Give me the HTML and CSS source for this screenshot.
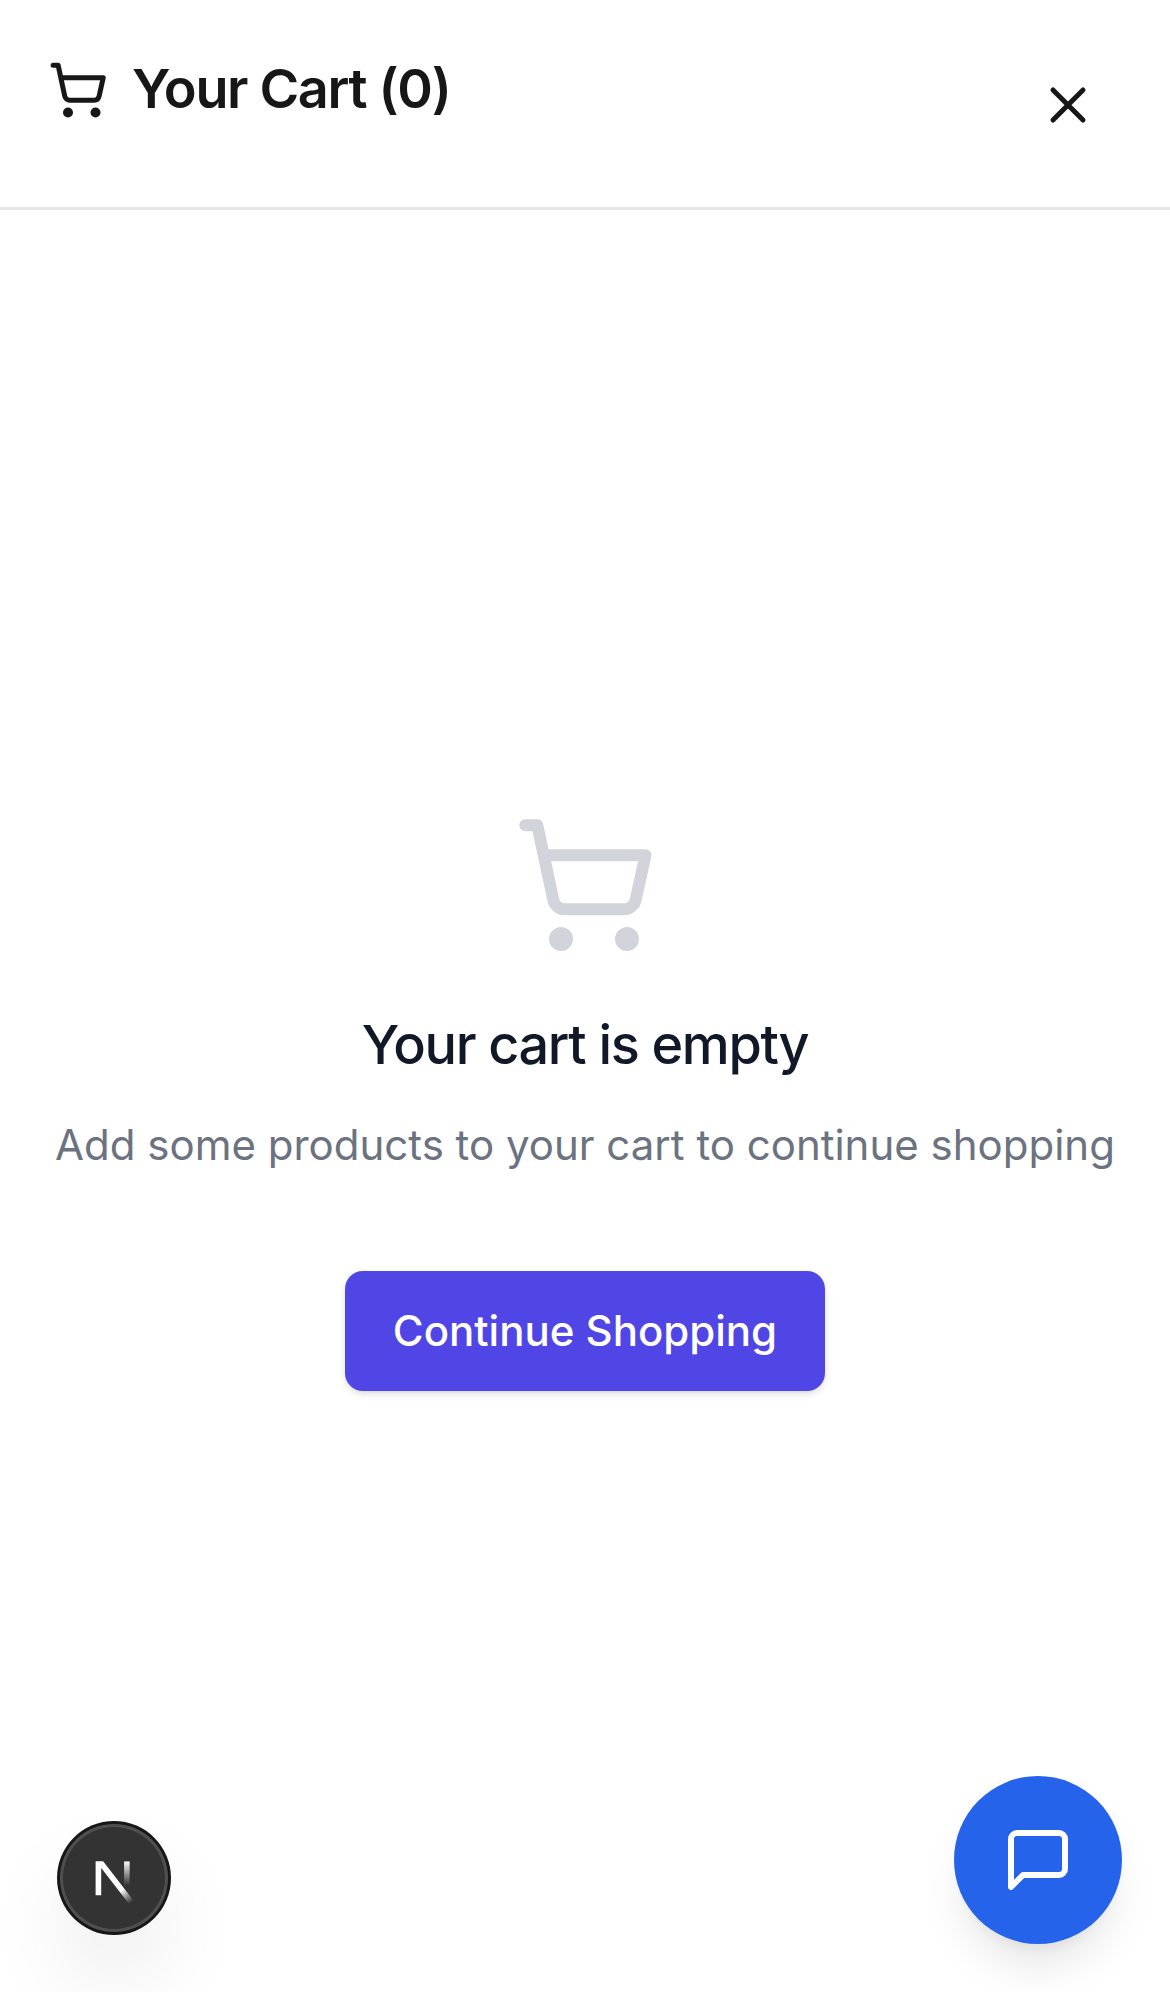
FILE: index.html
```html
<!DOCTYPE html>
<html lang="en">
<head>
<meta charset="utf-8">
<title>Your Cart</title>
<link rel="stylesheet" href="styles.css">
</head>
<body>
<div class="drawer">
  <header class="drawer-header">
    <h2 class="drawer-title">
      <svg class="icon title-icon" viewBox="0 0 24 24"><circle cx="8" cy="21" r="1"/><circle cx="19" cy="21" r="1"/><path d="M2.05 2.05h2l2.66 12.42a2 2 0 0 0 2 1.58h9.78a2 2 0 0 0 1.95-1.57l1.65-7.43H5.12"/></svg>
      <span>Your Cart (0)</span>
    </h2>
    <button class="close" aria-label="Close">
      <svg class="icon" viewBox="0 0 24 24"><path d="M18 6 6 18M6 6l12 12"/></svg>
    </button>
  </header>
  <main class="empty">
    <svg class="icon empty-icon" viewBox="0 0 24 24"><circle cx="8" cy="21" r="1"/><circle cx="19" cy="21" r="1"/><path d="M2.05 2.05h2l2.66 12.42a2 2 0 0 0 2 1.58h9.78a2 2 0 0 0 1.95-1.57l1.65-7.43H5.12"/></svg>
    <h3 class="empty-title">Your cart is empty</h3>
    <p class="empty-text">Add some products to your cart to continue shopping</p>
    <button class="continue">Continue Shopping</button>
  </main>
</div>
<button class="dev-badge" aria-label="Dev tools">
  <svg viewBox="0 0 36 36" fill="none">
    <defs>
      <linearGradient id="diagonal" x1="9.95555" y1="11.1226" x2="15.4778" y2="17.9671" gradientUnits="userSpaceOnUse"><stop stop-color="#fff"/><stop offset=".604" stop-color="#fff" stop-opacity="0"/></linearGradient>
      <linearGradient id="stem" x1="11.8222" y1="1.40039" x2="11.791" y2="9.62542" gradientUnits="userSpaceOnUse"><stop stop-color="#fff"/><stop offset="1" stop-color="#fff" stop-opacity="0"/></linearGradient>
      <clipPath id="mark"><rect x="0" y="1.5" width="16" height="14.5"/></clipPath>
    </defs>
    <g transform="translate(10.46 10.9)" stroke-width="1.86" clip-path="url(#mark)">
      <path d="M13.3 15.2 2.34 1v11.85" stroke="url(#diagonal)"/>
      <path d="M11.825 1.5v11.6" stroke="url(#stem)"/>
    </g>
  </svg>
</button>
<button class="chat" aria-label="Chat">
  <svg class="icon" viewBox="0 0 24 24"><path d="M21 15a2 2 0 0 1-2 2H7l-4 4V5a2 2 0 0 1 2-2h14a2 2 0 0 1 2 2z"/></svg>
</button>
</body>
</html>
```
FILE: styles.css
```css
* { box-sizing: border-box; margin: 0; padding: 0; }
body {
  background: #fff;
  font-family: Inter, "Liberation Sans", sans-serif;
  font-variation-settings: "opsz" 14;
}
button { border: 0; font: inherit; font-variation-settings: inherit; background: none; }
svg { display: block; flex: none; }
.icon { fill: none; stroke: currentColor; stroke-width: 2; stroke-linecap: round; stroke-linejoin: round; }
.drawer { display: flex; flex-direction: column; height: 1992px; }
.drawer-header {
  display: flex;
  justify-content: space-between;
  align-items: flex-start;
  height: 210px;
  padding: 48px;
  border-bottom: 3px solid #e5e7eb;
  color: #171717;
}
.drawer-title {
  display: flex;
  align-items: center;
  gap: 24px;
  height: 84px;
  font-size: 54px;
  font-weight: 600;
  line-height: 82px;
  letter-spacing: -0.025em;
}
.drawer-title span { padding-bottom: 2px; }
.title-icon { width: 60px; height: 60px; }
.close {
  display: flex;
  align-items: center;
  justify-content: center;
  width: 108px;
  height: 114px;
  color: inherit;
}
.close svg { width: 60px; height: 60px; }
.empty {
  flex: 1;
  display: flex;
  flex-direction: column;
  align-items: center;
  justify-content: center;
  padding-top: 2px;
  white-space: nowrap;
}
.empty-icon { width: 144px; height: 144px; margin-bottom: 48px; color: #d1d5db; }
.empty-title { margin-bottom: 30px; font-size: 54px; font-weight: 500; line-height: 80px; color: #111827; letter-spacing: -0.025em; }
.empty-text { margin-bottom: 96px; font-size: 42px; line-height: 60px; color: #6b7280; }
.continue {
  height: 120px;
  padding: 0 48px;
  border-radius: 18px;
  background: #4f46e5;
  color: #fff;
  font-size: 42px;
  font-weight: 500;
  line-height: 60px;
  box-shadow: 0 3px 9px rgba(0,0,0,.1), 0 3px 6px -3px rgba(0,0,0,.1);
}
.dev-badge {
  position: fixed;
  left: 60px;
  bottom: 60px;
  width: 108px;
  height: 108px;
  border-radius: 50%;
  background: #333;
  box-shadow: 0 0 0 3px #171717, inset 0 0 0 3px rgba(255,255,255,.14), 0 48px 96px -24px rgba(0,0,0,.24);
}
.chat {
  position: fixed;
  right: 48px;
  bottom: 48px;
  display: flex;
  align-items: center;
  justify-content: center;
  width: 168px;
  height: 168px;
  border-radius: 50%;
  background: #2563eb;
  color: #fff;
  box-shadow: 0 30px 45px -9px rgba(0,0,0,.1), 0 12px 18px -12px rgba(0,0,0,.1);
}
.chat svg { width: 72px; height: 72px; }
```
